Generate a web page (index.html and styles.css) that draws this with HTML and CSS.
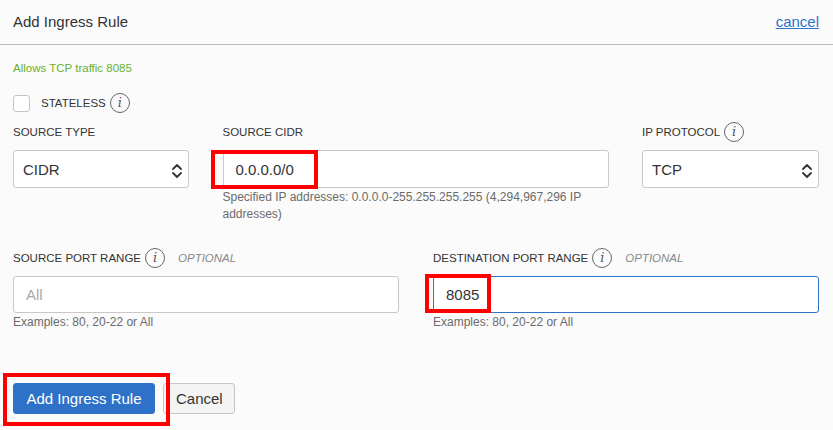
FILE: index.html
```html
<!DOCTYPE html>
<html>
<head>
<meta charset="utf-8">
<link rel="stylesheet" href="styles.css">
</head>
<body>
<div class="dialog">
  <header class="dlg-head">
    <h1 class="dlg-title">Add Ingress Rule</h1>
    <a class="dlg-cancel" href="#">cancel</a>
  </header>
  <div class="dlg-body">
    <p class="desc">Allows TCP traffic 8085</p>

    <div class="check-row">
      <span class="checkbox"></span>
      <span class="label">STATELESS</span>
      <span class="info"><i>i</i></span>
    </div>

    <div class="row3">
      <div class="field">
        <div class="label-row"><span class="label">SOURCE TYPE</span></div>
        <div class="select">
          <span>CIDR</span>
          <svg class="chev" width="12" height="18" viewBox="0 0 12 18"><path d="M2 7 L6 3 L10 7 M2 11 L6 15 L10 11" fill="none" stroke="#333" stroke-width="1.8" stroke-linecap="round" stroke-linejoin="round"/></svg>
        </div>
      </div>
      <div class="field">
        <div class="label-row"><span class="label">SOURCE CIDR</span></div>
        <div class="input-wrap">
          <div class="input val-cidr">0.0.0.0/0</div>
          <span class="mark mark-cidr"></span>
        </div>
        <p class="help">Specified IP addresses: 0.0.0.0-255.255.255.255 (4,294,967,296 IP addresses)</p>
      </div>
      <div class="field">
        <div class="label-row"><span class="label">IP PROTOCOL</span><span class="info"><i>i</i></span></div>
        <div class="select sel-tcp">
          <span>TCP</span>
          <svg class="chev" width="12" height="18" viewBox="0 0 12 18"><path d="M2 7 L6 3 L10 7 M2 11 L6 15 L10 11" fill="none" stroke="#333" stroke-width="1.8" stroke-linecap="round" stroke-linejoin="round"/></svg>
        </div>
      </div>
    </div>

    <div class="row2">
      <div class="field">
        <div class="label-row"><span class="label">SOURCE PORT RANGE</span><span class="info"><i>i</i></span><span class="optional">OPTIONAL</span></div>
        <div class="input input-port placeholder">All</div>
        <p class="help">Examples: 80, 20-22 or All</p>
      </div>
      <div class="field">
        <div class="label-row"><span class="label">DESTINATION PORT RANGE</span><span class="info"><i>i</i></span><span class="optional">OPTIONAL</span></div>
        <div class="input-wrap">
          <div class="input input-port focused">8085</div>
          <span class="mark mark-port"></span>
        </div>
        <p class="help">Examples: 80, 20-22 or All</p>
      </div>
    </div>

    <div class="actions">
      <div class="btn-wrap">
        <button class="btn btn-primary">Add Ingress Rule</button>
        <span class="mark mark-btn"></span>
      </div>
      <button class="btn btn-default">Cancel</button>
    </div>
  </div>
</div>
</body>
</html>
```

FILE: styles.css
```css
* { box-sizing: border-box; }
html, body {
  margin: 0;
  padding: 0;
  background: #fbfbfb;
  font-family: "Liberation Sans", Arial, sans-serif;
  color: #333;
}
.dialog {
  width: 833px;
  height: 430px;
  overflow: hidden;
}
.dlg-head {
  height: 45px;
  border-bottom: 1px solid #b7bbc6;
  display: flex;
  align-items: center;
  justify-content: space-between;
  padding: 0 14px 2px 13px;
}
.dlg-title {
  margin: 0;
  font-size: 15px;
  font-weight: normal;
  color: #333;
}
.dlg-cancel {
  font-size: 15px;
  color: #2f73c9;
  text-decoration: underline;
}
.dlg-body {
  padding: 0 14px 0 13px;
}
.desc {
  margin: 16px 0 0;
  font-size: 11.5px;
  line-height: 14px;
  color: #6cb02c;
}
.check-row {
  display: flex;
  align-items: center;
  height: 20px;
  margin-top: 18px;
}
.checkbox {
  width: 17px;
  height: 17px;
  border: 1px solid #c4c4c4;
  border-radius: 3px;
  background: #fff;
  margin-right: 11px;
}
.label {
  font-size: 11.5px;
  color: #333;
  line-height: 14px;
}
.info {
  width: 20px;
  height: 20px;
  border: 1.3px solid #666;
  border-radius: 50%;
  display: inline-flex;
  align-items: center;
  justify-content: center;
  margin-left: 4px;
  flex: none;
}
.info i {
  font-family: "DejaVu Serif", "Liberation Serif", serif;
  font-style: italic;
  font-size: 13px;
  color: #555;
  line-height: 1;
  margin-top: -1px;
}
.row3 {
  display: grid;
  grid-template-columns: 176px 386px 177px;
  justify-content: space-between;
  margin-top: 9px;
}
.row2 {
  display: grid;
  grid-template-columns: 386px 386px;
  justify-content: space-between;
  margin-top: 25px;
}
.field {
  display: flex;
  flex-direction: column;
}
.label-row {
  height: 20px;
  display: flex;
  align-items: center;
  margin-bottom: 8px;
}
.optional {
  font-size: 11.5px;
  font-style: italic;
  color: #888;
  margin-left: 13px;
}
.select {
  height: 38px;
  border: 1px solid #c8c8c8;
  border-radius: 3px;
  background: #fff;
  display: flex;
  align-items: center;
  justify-content: space-between;
  padding: 0 5px 0 9px;
  font-size: 15px;
  color: #333;
}
.sel-tcp { padding-left: 9px; }
.chev { margin-top: 3px; }
.input-wrap {
  position: relative;
}
.input {
  height: 38px;
  border: 1px solid #c8c8c8;
  border-radius: 3px;
  background: #fff;
  display: flex;
  align-items: center;
  padding: 0 12px;
  font-size: 15px;
  color: #333;
}
.input-port { height: 37px; }
.placeholder { color: #a8a8a8; }
.focused { border-color: #2f73c9; }
.help {
  margin: 1px 0 0;
  font-size: 12px;
  line-height: 17px;
  color: #6b6b6b;
}
.mark {
  position: absolute;
  border: 4px solid #f00;
  pointer-events: none;
}
.mark-cidr {
  left: -12px;
  top: 0;
  width: 107px;
  height: 39px;
}
.mark-port {
  left: -8px;
  top: -2px;
  width: 66px;
  height: 39px;
}
.actions {
  display: flex;
  align-items: center;
  gap: 8px;
  margin-top: 52px;
}
.btn-wrap {
  position: relative;
}
.btn {
  height: 31px;
  font-family: "Liberation Sans", Arial, sans-serif;
  font-size: 15px;
  border-radius: 3px;
  padding: 0 12px;
  cursor: pointer;
}
.btn-primary {
  background: #2d72c8;
  color: #fff;
  border: 1px solid #2d72c8;
  width: 142px;
}
.btn-default {
  background: #f4f4f4;
  color: #333;
  border: 1px solid #c3c6ca;
  width: 72px;
}
.mark-btn {
  left: -10px;
  top: -10px;
  width: 167px;
  height: 53px;
}
```
